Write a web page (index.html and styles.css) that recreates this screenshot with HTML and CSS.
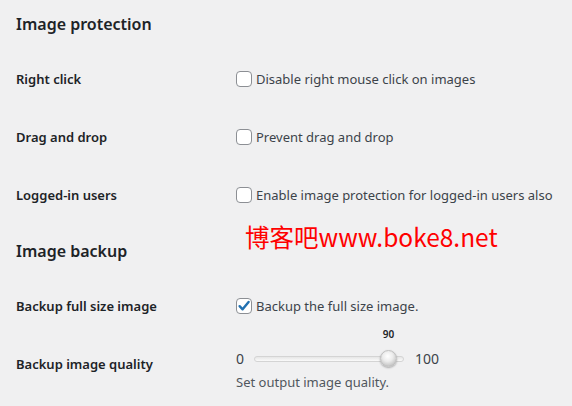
FILE: index.html
```html
<!DOCTYPE html>
<html lang="en">
<head>
    <meta charset="UTF-8">
    <meta name="viewport" content="width=device-width, initial-scale=1.0">
    <title>Image protection</title>
    <link rel="stylesheet" href="styles.css">
</head>
<body>
    <div class="wrap">
        <h2 class="section-title">Image protection</h2>
        <div class="form-table">
            <div class="row">
                <div class="row-label">Right click</div>
                <div class="row-field">
                    <label class="check"><span class="box"></span>Disable right mouse click on images</label>
                </div>
            </div>
            <div class="row">
                <div class="row-label">Drag and drop</div>
                <div class="row-field">
                    <label class="check"><span class="box"></span>Prevent drag and drop</label>
                </div>
            </div>
            <div class="row">
                <div class="row-label">Logged-in users</div>
                <div class="row-field">
                    <label class="check"><span class="box"></span>Enable image protection for logged-in users also</label>
                </div>
            </div>
        </div>

        <h2 class="section-title">Image backup</h2>
        <div class="form-table last">
            <div class="row">
                <div class="row-label">Backup full size image</div>
                <div class="row-field">
                    <label class="check"><span class="box checked">
                        <svg viewBox="0 0 16 16" width="16" height="16"><path d="M3.6 8.2l3 3.1 6-7.4" fill="none" stroke="#2271b1" stroke-width="2.4" stroke-linecap="round" stroke-linejoin="round"/></svg>
                    </span>Backup the full size image.</label>
                </div>
            </div>
            <div class="row">
                <div class="row-label">Backup image quality</div>
                <div class="row-field slider-field">
                    <div class="slider-line">
                        <span class="slider-min">0</span>
                        <div class="slider">
                            <div class="track"></div>
                            <div class="thumb" style="left: 90%;"><span class="thumb-value">90</span></div>
                        </div>
                        <span class="slider-max">100</span>
                    </div>
                    <p class="description">Set output image quality.</p>
                </div>
            </div>
        </div>

        <div class="watermark">博客吧www.boke8.net</div>
    </div>
</body>
</html>
```

FILE: styles.css
```css
* {
    margin: 0;
    padding: 0;
    box-sizing: border-box;
}

body {
    font-family: "Noto Sans", Arial, sans-serif;
    font-size: 13px;
    line-height: 18px;
    background-color: #f0f0f1;
    color: #1d2327;
}

.wrap {
    position: relative;
    padding: 13px 16px 0;
}

.section-title {
    font-size: 16px;
    font-weight: 600;
    line-height: 22px;
    margin-bottom: 15px;
}

.form-table {
    margin-bottom: 16px;
}

.form-table.last {
    margin-bottom: 0;
}

.row {
    display: grid;
    grid-template-columns: 220px 1fr;
}

.row-label {
    font-weight: 600;
    padding: 20px 0;
}

.row-field {
    padding: 20px 0;
    color: #3c434a;
}

.check {
    display: flex;
    align-items: center;
}

.box {
    width: 16px;
    height: 16px;
    margin-right: 4px;
    border: 1px solid #8c8f94;
    border-radius: 4px;
    background-color: #fff;
    display: flex;
    align-items: center;
    justify-content: center;
}

.box svg {
    display: block;
    flex: none;
}

.slider-field {
    padding-top: 15px;
    padding-bottom: 0;
}

.slider-line {
    display: flex;
    align-items: center;
    height: 18px;
    font-size: 14px;
}

.slider-min {
    width: 18px;
}

.slider {
    position: relative;
    width: 150px;
    height: 18px;
    margin-right: 11px;
}

.track {
    position: absolute;
    left: 0;
    right: 0;
    top: 6px;
    height: 6px;
    border: 1px solid #d4d4d4;
    border-radius: 3px;
    background: linear-gradient(#e6e6e6, #fafafa);
}

.thumb {
    position: absolute;
    top: 0;
    width: 17px;
    height: 17px;
    margin-left: -9px;
    border-radius: 50%;
    border: 1px solid #c0c0c0;
    background: radial-gradient(circle at 45% 35%, #ffffff 0%, #ececec 40%, #acacac 100%);
    box-shadow: 0 1px 2px rgba(0, 0, 0, 0.3);
}

.thumb-value {
    position: absolute;
    left: 50%;
    bottom: 26px;
    transform: translateX(-50%);
    font-size: 10px;
    line-height: 12px;
    font-weight: 600;
    color: #1d2327;
}

.description {
    margin-top: 5px;
    color: #50575e;
}

.watermark {
    position: absolute;
    left: 245px;
    top: 221px;
    font-family: "Noto Sans CJK SC", sans-serif;
    font-size: 24.5px;
    line-height: 32px;
    color: #ff0000;
}
```
